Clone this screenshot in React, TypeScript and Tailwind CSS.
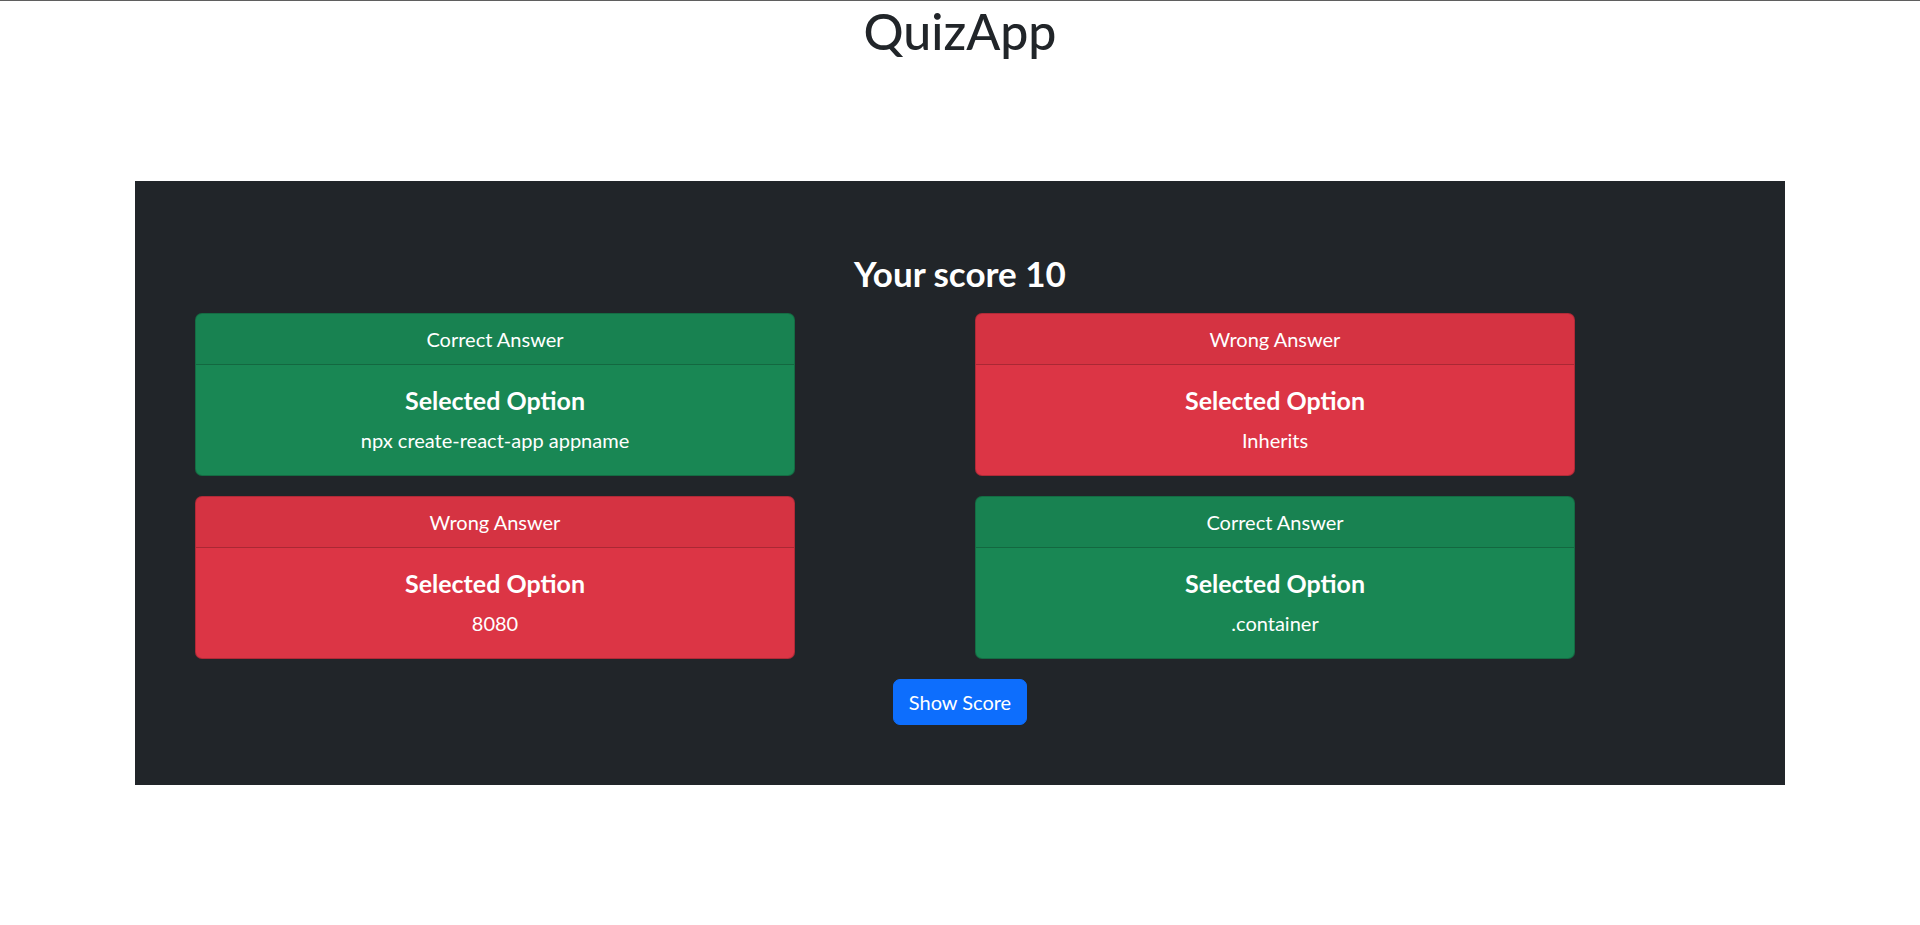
const results = [
  { correct: true, option: 'npx create-react-app appname' },
  { correct: false, option: 'Inherits' },
  { correct: false, option: '8080' },
  { correct: true, option: '.container' },
]

function ResultCard({ correct, option }: { correct: boolean; option: string }) {
  return (
    <div
      className={`w-[600px] overflow-hidden rounded-[7px] border border-black/20 text-white ${
        correct ? 'bg-[#198754]' : 'bg-[#dc3545]'
      }`}
    >
      <div className="border-b border-black/20 bg-black/[0.03] px-5 py-[10px] text-center text-[20px] leading-[30px]">
        {correct ? 'Correct Answer' : 'Wrong Answer'}
      </div>
      <div className="px-5 pt-5 pb-5 text-center">
        <h5 className="mb-[10px] text-[25px] font-bold leading-[30px]">Selected Option</h5>
        <p className="text-[20px] leading-[30px]">{option}</p>
      </div>
    </div>
  )
}

export default function App() {
  return (
    <div className="min-h-screen border-t border-[#5f5f5f] bg-white font-['Lato',sans-serif] text-[#212529]">
      <h1 className="text-center text-[50px] font-medium leading-[60px]">QuizApp</h1>

      <section className="mx-auto mt-[120px] w-[1650px] bg-[#212529] pt-[71px] pb-[60px]">
        <h3 className="mb-[19px] text-center text-[35px] font-bold leading-[42px] text-white">
          Your score 10
        </h3>

        <div className="grid grid-cols-[780px_780px] gap-y-[20px] pl-[60px]">
          {results.map((r, i) => (
            <ResultCard key={i} correct={r.correct} option={r.option} />
          ))}
        </div>

        <div className="mt-[20px] flex justify-center">
          <button className="rounded-[7px] border border-[#0d6efd] bg-[#0d6efd] px-[15px] py-[7px] text-[20px] leading-[30px] text-white">
            Show Score
          </button>
        </div>
      </section>
    </div>
  )
}
